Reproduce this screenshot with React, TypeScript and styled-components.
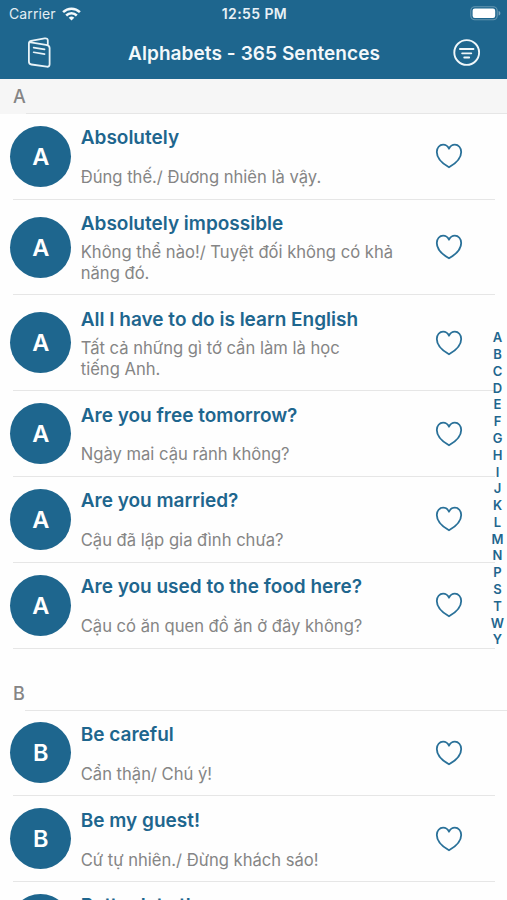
import React from 'react';
import styled, { createGlobalStyle } from 'styled-components';

const BLUE = '#1e668e';

const GlobalStyle = createGlobalStyle`
  * { box-sizing: border-box; }
  body {
    margin: 0;
    background: #fefefe;
    font-family: Inter, 'Liberation Sans', sans-serif;
    overflow: hidden;
  }
`;

const Screen = styled.div`
  position: relative;
  display: flex;
  flex-direction: column;
  width: 507px;
  height: 900px;
  overflow: hidden;
  background: #fefefe;
`;

const Header = styled.header`
  flex: none;
  height: 79px;
  background: ${BLUE};
  color: #fff;
`;

const StatusBar = styled.div`
  display: grid;
  grid-template-columns: 1fr auto 1fr;
  align-items: center;
  height: 27px;
  padding: 0 6px 0 9px;
`;

const Carrier = styled.div`
  display: flex;
  align-items: center;
  gap: 6px;
  font-size: 14px;
  letter-spacing: 0.1px;
  color: #e3edf3;
`;

const Clock = styled.div`
  font-size: 14px;
  font-weight: 600;
  letter-spacing: 0.4px;
  margin-left: -1px;
  color: #e8f1f6;
`;

const BatteryIcon = styled.svg`
  justify-self: end;
`;

const NavBar = styled.div`
  display: grid;
  grid-template-columns: 30px 1fr 30px;
  align-items: center;
  height: 52px;
  padding: 0 26px 0 25px;
`;

const NavTitle = styled.h1`
  margin: 0;
  padding-left: 2px;
  text-align: center;
  font-size: 19px;
  font-weight: 600;
  letter-spacing: 0.08px;
  white-space: nowrap;
  color: #f3f8fb;
`;

const List = styled.main`
  flex: none;
`;

const SectionHeader = styled.h2<{ $pinned?: boolean }>`
  display: flex;
  align-items: center;
  height: 34.9px;
  margin: ${(p) => (p.$pinned ? '0' : '27px 0 0')};
  padding-left: 13px;
  font-size: 18px;
  font-weight: 500;
  color: #858585;
  background: ${(p) => (p.$pinned ? '#f6f6f6' : 'transparent')};

  &::after {
    content: '';
    align-self: flex-end;
    flex: 1;
    height: 1px;
    background: #e6e6e6;
  }
`;

const Row = styled.article<{ $tall?: boolean }>`
  display: flex;
  align-items: center;
  height: ${(p) => (p.$tall ? 95.8 : 85.8)}px;
  margin: 0 12px 0 13px;
  border-bottom: 1px solid #e6e6e6;
`;

const Avatar = styled.div`
  flex: none;
  display: flex;
  align-items: center;
  justify-content: center;
  width: 61px;
  height: 61px;
  margin-left: -2.7px;
  border-radius: 50%;
  background: ${BLUE};
  color: #fff;
  font-size: 23.5px;
  font-weight: 600;
`;

const Copy = styled.div`
  flex: none;
  align-self: stretch;
  display: flex;
  flex-direction: column;
  justify-content: space-between;
  width: 340px;
  padding: 12.3px 0 11.2px 9.4px;
`;

const Phrase = styled.h3`
  margin: 0;
  font-size: 19px;
  line-height: 24px;
  font-weight: 600;
  white-space: nowrap;
  color: ${BLUE};
`;

const Meaning = styled.p`
  margin: 0;
  font-size: 16.6px;
  line-height: 20.4px;
  white-space: pre-line;
  color: #858585;
`;

const FavoriteButton = styled.button`
  display: flex;
  margin: 0 0 0 23.3px;
  padding: 0;
  border: 0;
  background: none;
`;

const IndexBar = styled.nav`
  position: absolute;
  top: 329.3px;
  right: 0;
  display: flex;
  flex-direction: column;
  align-items: center;
  width: 19px;
  font-size: 13px;
  line-height: 16.78px;
  font-weight: 600;
  color: ${BLUE};
`;

const WifiIcon = () => (
  <svg width="19" height="14" viewBox="0 0 19 14" fill="none" stroke="#f4f9fb" strokeWidth="2.5">
    <path d="M1.1 5.2a12 12 0 0 1 16.8 0" />
    <path d="M4.2 8.5a7.5 7.5 0 0 1 10.6 0" />
    <path d="M9.5 13.6 6.7 10.8a4 4 0 0 1 5.6 0Z" fill="#f4f9fb" stroke="none" />
  </svg>
);

const Battery = () => (
  <BatteryIcon width="31" height="15" viewBox="0 0 31 15">
    <rect x="0.8" y="0.8" width="26.4" height="13" rx="4" fill="none" stroke="#6596b1" strokeWidth="1.1" />
    <rect x="2.6" y="2.6" width="22.6" height="9.4" rx="2.2" fill="#fff" />
    <path d="M28.6 5v4.6c1.1-.4 1.8-1.2 1.8-2.3S29.7 5.4 28.6 5Z" fill="#79a4bc" />
  </BatteryIcon>
);

const BookIcon = () => (
  <svg width="30" height="32" viewBox="0 0 30 32" fill="none" stroke="#e8f3f8" strokeWidth="1.8" strokeLinecap="round" strokeLinejoin="round">
    <path d="M4.2 5.2 21 7.9Q24.6 8.5 24.6 11V27.2Q24.6 30.1 21.7 29.7L6.5 27.5Q3.9 27.1 3.9 24.5V6.5Q3.9 4.4 6 3.9L19.7 1.4Q22.8 1 22.8 3.4V8.3" />
    <path d="m8.6 10.6 11 1.8M8.6 15.3l11 1.8" strokeWidth="1.6" />
  </svg>
);

const FilterIcon = () => (
  <svg width="30" height="30" viewBox="0 0 30 30" fill="none" stroke="#f0f7fa" strokeLinecap="round">
    <circle cx="15.7" cy="14.5" r="12.4" strokeWidth="1.9" />
    <path d="M8.9 11h13.6M11.1 15.3h9.2M13.2 19.5h5" strokeWidth="1.8" />
  </svg>
);

const HeartIcon = () => (
  <svg width="28" height="26" viewBox="0 0 28 26" fill="none" stroke="#2a7199" strokeWidth="1.8" strokeLinejoin="round">
    <path d="M14 24.3C8.8 21.3 1.8 15.7 1.8 8.9 1.8 4.7 4.6 1.7 8.1 1.7c2.7 0 4.7 1.5 5.9 4 1.2-2.5 3.2-4 5.9-4 3.5 0 6.3 3 6.3 7.2 0 6.8-7 12.4-12.2 15.4Z" />
  </svg>
);

interface Sentence {
  phrase: string;
  meaning: string;
  tall?: boolean;
}

const sections: { letter: string; items: Sentence[] }[] = [
  {
    letter: 'A',
    items: [
      { phrase: 'Absolutely', meaning: 'Đúng thế./ Đương nhiên là vậy.' },
      { phrase: 'Absolutely impossible', meaning: 'Không thể nào!/ Tuyệt đối không có khả\nnăng đó.', tall: true },
      { phrase: 'All I have to do is learn English', meaning: 'Tất cả những gì tớ cần làm là học\ntiếng Anh.', tall: true },
      { phrase: 'Are you free tomorrow?', meaning: 'Ngày mai cậu rảnh không?' },
      { phrase: 'Are you married?', meaning: 'Cậu đã lập gia đình chưa?' },
      { phrase: 'Are you used to the food here?', meaning: 'Cậu có ăn quen đồ ăn ở đây không?' },
    ],
  },
  {
    letter: 'B',
    items: [
      { phrase: 'Be careful', meaning: 'Cẩn thận/ Chú ý!' },
      { phrase: 'Be my guest!', meaning: 'Cứ tự nhiên./ Đừng khách sáo!' },
      { phrase: 'Better late than never', meaning: 'Thà muộn còn hơn không.' },
    ],
  },
];

export default function App() {
  return (
    <Screen>
      <GlobalStyle />
      <Header>
        <StatusBar>
          <Carrier>
            Carrier
            <WifiIcon />
          </Carrier>
          <Clock>12:55 PM</Clock>
          <Battery />
        </StatusBar>
        <NavBar>
          <BookIcon />
          <NavTitle>Alphabets - 365 Sentences</NavTitle>
          <FilterIcon />
        </NavBar>
      </Header>
      <List>
        {sections.map((section, index) => (
          <section key={section.letter}>
            <SectionHeader $pinned={index === 0}>{section.letter}</SectionHeader>
            {section.items.map((item) => (
              <Row key={item.phrase} $tall={item.tall}>
                <Avatar>{section.letter}</Avatar>
                <Copy>
                  <Phrase>{item.phrase}</Phrase>
                  <Meaning>{item.meaning}</Meaning>
                </Copy>
                <FavoriteButton aria-label="Favorite">
                  <HeartIcon />
                </FavoriteButton>
              </Row>
            ))}
          </section>
        ))}
      </List>
      <IndexBar>
        {'ABCDEFGHIJKLMNPSTWY'.split('').map((letter) => (
          <span key={letter}>{letter}</span>
        ))}
      </IndexBar>
    </Screen>
  );
}
